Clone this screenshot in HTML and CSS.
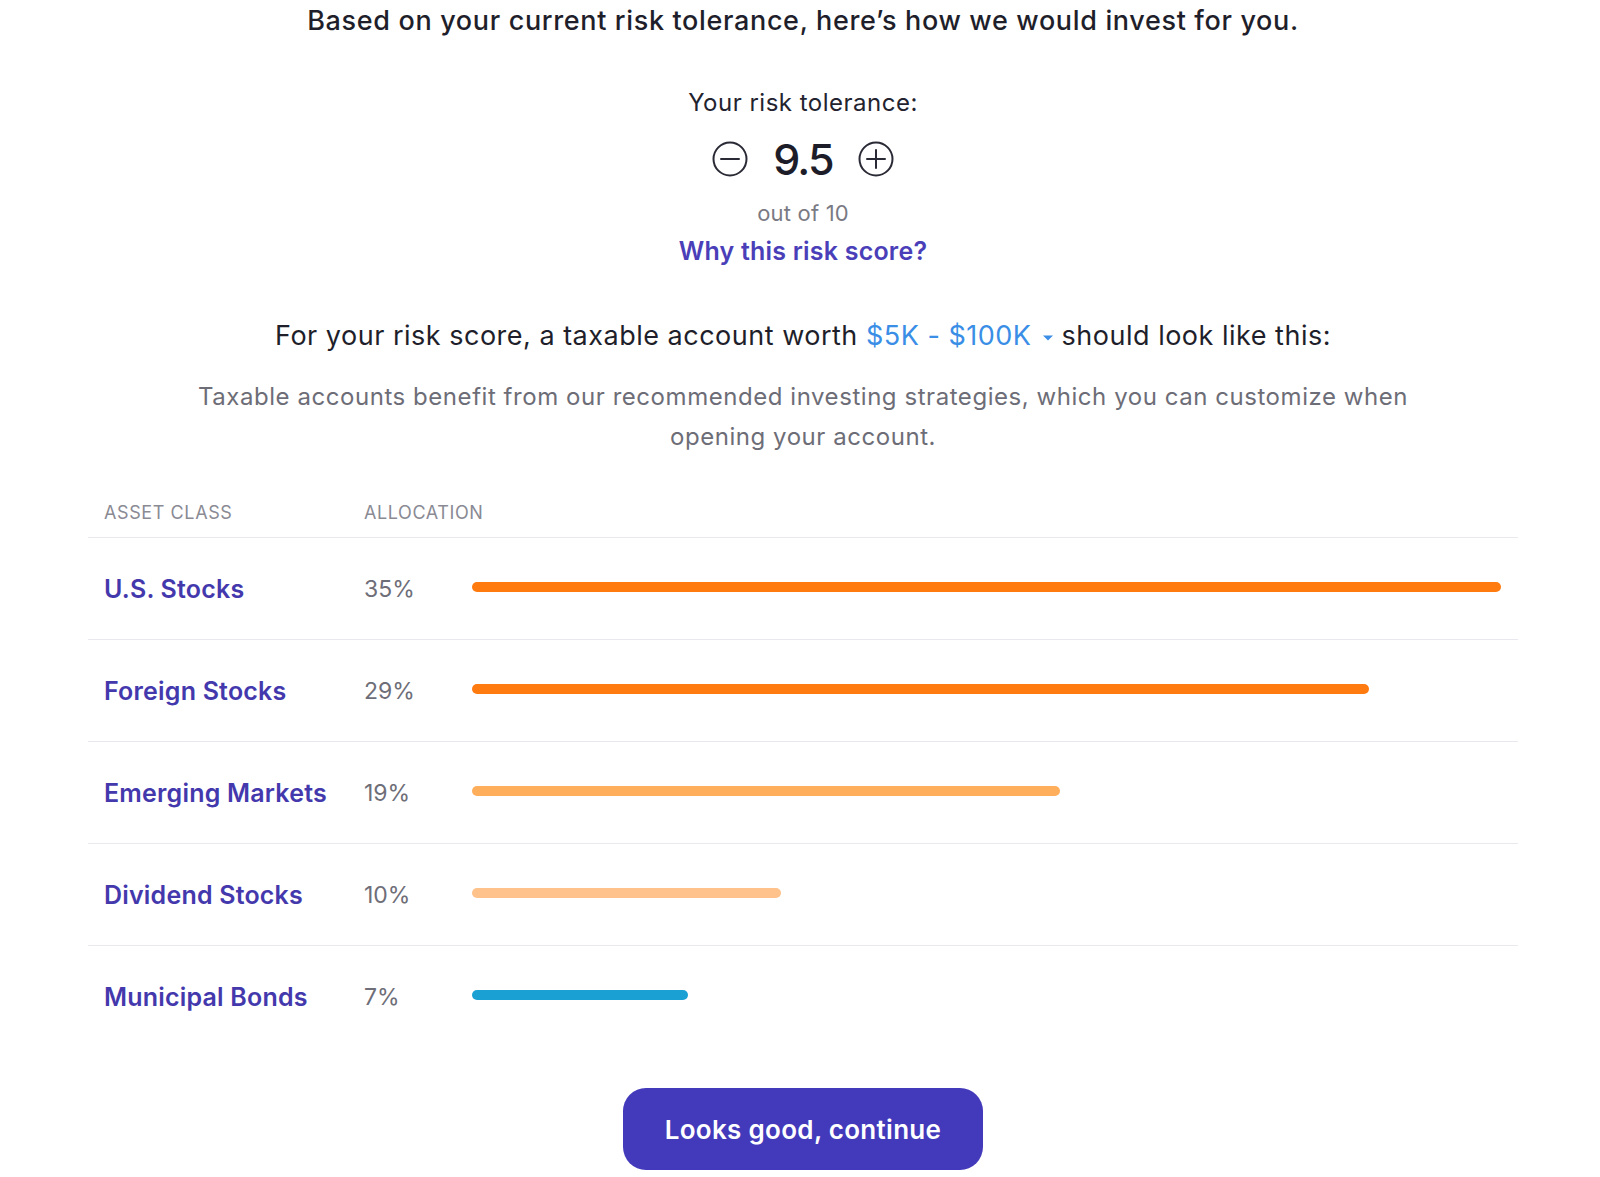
FILE: index.html
```html
<!DOCTYPE html>
<html>
<head>
<meta charset="utf-8">
<link rel="stylesheet" href="styles.css">
</head>
<body>
<div class="page">
  <h1 class="title">Based on your current risk tolerance, here’s how we would invest for you.</h1>
  <div class="risk">
    <div class="risk-label">Your risk tolerance:</div>
    <div class="risk-controls">
      <svg class="ctl" width="36" height="36" viewBox="0 0 36 36"><circle cx="18" cy="18" r="16.5" fill="none" stroke="#2a2a36" stroke-width="2"/><path d="M9 18h18" stroke="#2a2a36" stroke-width="2" stroke-linecap="round"/></svg>
      <span class="score">9.5</span>
      <svg class="ctl" width="36" height="36" viewBox="0 0 36 36"><circle cx="18" cy="18" r="16.5" fill="none" stroke="#2a2a36" stroke-width="2"/><path d="M9 18h18M18 9v18" stroke="#2a2a36" stroke-width="2" stroke-linecap="round"/></svg>
    </div>
    <div class="out">out of 10</div>
    <a class="why">Why this risk score?</a>
  </div>
  <p class="lead">For your risk score, a taxable account worth <span class="amt">$5K - $100K <svg width="12" height="8" viewBox="0 0 12 8"><path d="M1 1.5h10L6 6.5z" fill="#3a8ee6"/></svg></span> should look like this:</p>
  <p class="desc">Taxable accounts benefit from our recommended investing strategies, which you can customize when opening your account.</p>
  <div class="table">
    <div class="thead">
      <div class="c1">ASSET CLASS</div>
      <div class="c2">ALLOCATION</div>
    </div>
    <div class="row">
      <div class="c1 name">U.S. Stocks</div>
      <div class="c2 pct">35%</div>
      <div class="bar-wrap"><div class="bar orange" style="width:1029px"></div></div>
    </div>
    <div class="row">
      <div class="c1 name">Foreign Stocks</div>
      <div class="c2 pct">29%</div>
      <div class="bar-wrap"><div class="bar orange" style="width:897px"></div></div>
    </div>
    <div class="row">
      <div class="c1 name">Emerging Markets</div>
      <div class="c2 pct">19%</div>
      <div class="bar-wrap"><div class="bar light" style="width:588px"></div></div>
    </div>
    <div class="row">
      <div class="c1 name">Dividend Stocks</div>
      <div class="c2 pct">10%</div>
      <div class="bar-wrap"><div class="bar lighter" style="width:309px"></div></div>
    </div>
    <div class="row last">
      <div class="c1 name">Municipal Bonds</div>
      <div class="c2 pct">7%</div>
      <div class="bar-wrap"><div class="bar blue" style="width:216px"></div></div>
    </div>
  </div>
  <div class="actions">
    <button class="btn">Looks good, continue</button>
  </div>
</div>
</body>
</html>
```
FILE: styles.css
```css
html, body { margin: 0; padding: 0; background: #fff; }
body { font-family: Inter, "Noto Sans", sans-serif; color: #22222e; }
.page { width: 1430px; margin-left: 88px; display: flex; flex-direction: column; align-items: center; }
.title { font-size: 27px; font-weight: 500; margin: 4px 0 0; line-height: 34px; letter-spacing: 0.65px; color: #1f1f2b; }
.risk { display: flex; flex-direction: column; align-items: center; margin-top: 50px; }
.risk-label { font-size: 24px; line-height: 30px; color: #23232f; letter-spacing: 0.5px; }
.risk-controls { display: flex; align-items: center; gap: 25px; margin-top: 16px; height: 50px; }
.score { font-size: 43px; font-weight: 500; color: #1d1d2a; letter-spacing: -1.8px; }
.ctl { display: block; }
.out { font-size: 22px; color: #7a7a84; margin-top: 15px; line-height: 28px; letter-spacing: 0.2px; }
.why { font-size: 25px; font-weight: 600; color: #4a3fb8; margin-top: 7px; line-height: 34px; letter-spacing: 0.2px; }
.lead { font-size: 27px; margin: 50px 0 0; line-height: 36px; color: #1f1f2b; letter-spacing: 0.5px; }
.amt { color: #3a8ee6; }
.amt svg { vertical-align: middle; margin-left: 2px; }
.desc { font-size: 24px; line-height: 40px; color: #6d6d77; text-align: center; width: 1260px; margin: 23px 0 0; letter-spacing: 0.55px; }
.table { width: 1430px; margin-top: 30px; }
.thead { display: flex; align-items: center; height: 50px; border-bottom: 1.5px solid #e8e8ee; font-size: 18px; color: #8a8a94; letter-spacing: 0.6px; }
.c1 { width: 260px; padding-left: 16px; flex: none; }
.c2 { width: 108px; flex: none; }
.row { display: flex; align-items: center; height: 101px; border-bottom: 1.5px solid #e8e8ee; }
.row.last { border-bottom: none; }
.name { font-size: 25px; font-weight: 600; color: #4438ad; letter-spacing: 0.2px; }
.pct { font-size: 23px; color: #6e6e78; }
.bar-wrap { flex: 1; display: flex; margin-top: -4px; }
.bar { height: 10px; border-radius: 5px; }
.orange { background: #ff7a0f; }
.light { background: #ffae5c; }
.lighter { background: #ffc28a; }
.blue { background: #1ba0d4; }
.actions { margin-top: 41px; }
.btn { width: 360px; height: 82px; border: none; border-radius: 23px; background: #4339bb; color: #fff; font-family: Inter, "Noto Sans", sans-serif; font-size: 26px; font-weight: 600; letter-spacing: 0.3px; }
```
